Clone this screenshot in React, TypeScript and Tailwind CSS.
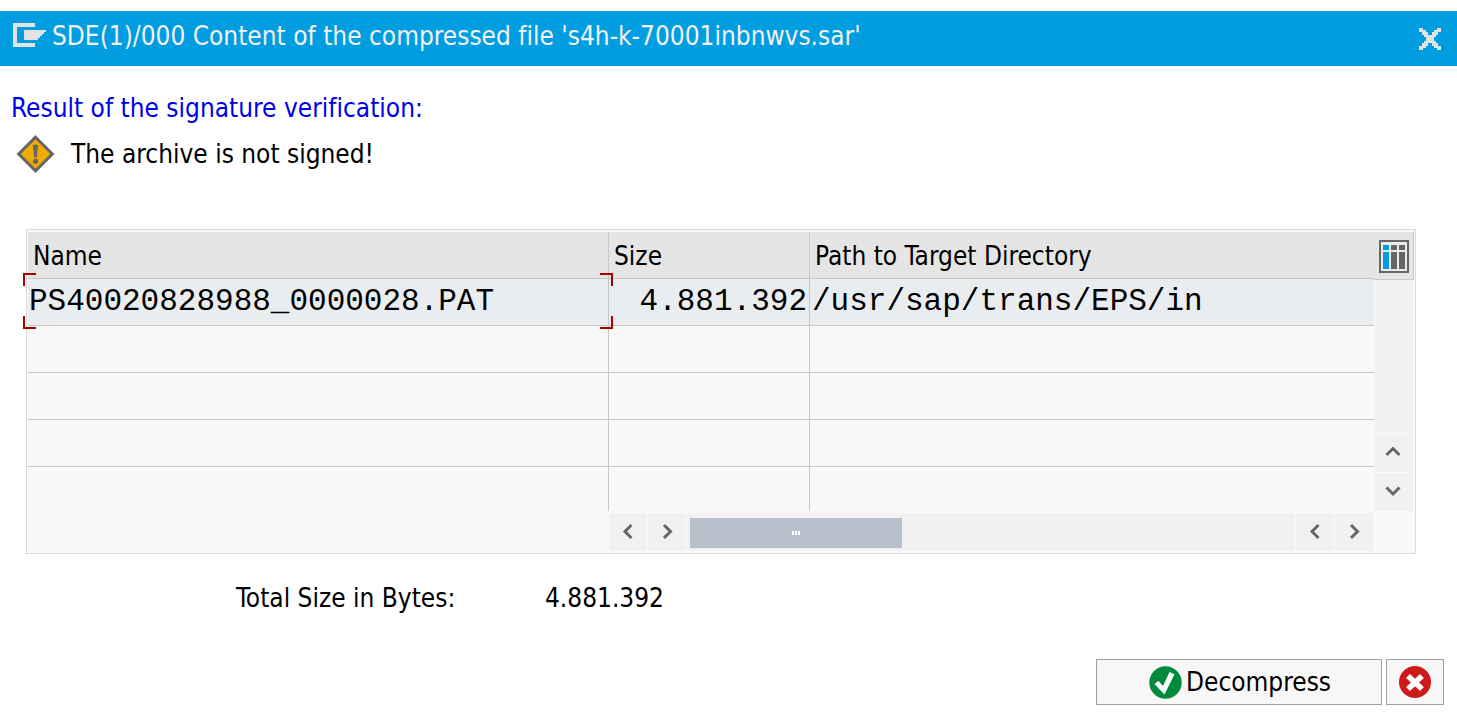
import React from "react";

type Direction = "left" | "right" | "up" | "down";

type ArchiveEntry = { name: string; size: string; path: string };

const entries: ArchiveEntry[] = [
  { name: "PS40020828988_0000028.PAT", size: "4.881.392", path: "/usr/sap/trans/EPS/in" },
];

const emptyRows = [0, 1, 2, 3];

const chevrons: Record<Direction, string> = {
  left: "M12.5 2 6 8.5l6.5 6.5",
  right: "M6 2l6.5 6.5L6 15",
  up: "M1.5 11 8 4.5l6.5 6.5",
  down: "M1.5 4.5 8 11l6.5-6.5",
};

function ScrollButton({ direction, label }: { direction: Direction; label: string }) {
  return (
    <button
      type="button"
      aria-label={label}
      className="flex size-[38px] shrink-0 items-center justify-center bg-[#f1f1f1]"
    >
      <svg viewBox="0 0 18 18" className="size-[18px]" fill="none" stroke="#666" strokeWidth="3">
        <path d={chevrons[direction]} />
      </svg>
    </button>
  );
}

function WindowIcon() {
  return (
    <svg viewBox="0 0 34 24" className="mb-2 h-6 w-[34px] shrink-0" fill="#e2e2e2" shapeRendering="crispEdges">
      <path d="M0 0h22v4H4v16h18v4H0z" />
      <path d="M11 7h22v2h-2v2h-2v2h-2v2h-2v2H11z" />
    </svg>
  );
}

function CloseIcon() {
  return (
    <svg viewBox="0 0 22 22" className="size-[22px]" fill="#e2e2e2" shapeRendering="crispEdges">
      <path d="M0 0h4v2h3v2h2v3h4V4h2V2h3V0h4v4h-3v3h-2v2h-2v4h2v2h2v3h3v4h-4v-2h-3v-2h-2v-3H9v3H7v2H4v2H0v-4h3v-3h2v-2h2V9H5V7H3V4H0z" />
    </svg>
  );
}

function WarningIcon() {
  return (
    <svg viewBox="0 0 40 40" className="size-10 shrink-0" role="img" aria-label="Warning">
      <path d="M20.5 3.2 37.3 20 20.5 36.8 3.7 20z" fill="#f0ab00" stroke="#666" strokeWidth="3" />
      <path d="M17.8 11.5q2.7-1.8 5.4 0l-1.5 12h-2.4z" fill="#666" />
      <circle cx="20.5" cy="27.3" r="2.6" fill="#666" />
    </svg>
  );
}

function ColumnsIcon() {
  return (
    <svg viewBox="0 0 30 33" className="h-[33px] w-[30px]" shapeRendering="crispEdges">
      <rect width="30" height="33" fill="#666" />
      <rect x="2" y="2" width="26" height="29" fill="#ececec" />
      <path d="M4 5h6v5H4zM4 12h6v17H4z" fill="#009de0" />
      <path d="M12 5h6v5h-6zM12 12h6v17h-6zM20 5h6v5h-6zM20 12h6v17h-6z" fill="#666" />
    </svg>
  );
}

function SelectionFrame() {
  return (
    <span aria-hidden="true" className="pointer-events-none absolute -top-1.5 -right-[5px] -bottom-1 -left-[5px]">
      <span className="absolute top-0 left-0 size-[13px] border-t-2 border-l-2 border-[#a80000]" />
      <span className="absolute top-0 right-0 size-[13px] border-t-2 border-r-2 border-[#a80000]" />
      <span className="absolute bottom-0 left-0 size-[13px] border-b-2 border-l-2 border-[#a80000]" />
      <span className="absolute right-0 bottom-0 size-[13px] border-r-2 border-b-2 border-[#a80000]" />
    </span>
  );
}

function ArchiveTable() {
  return (
    <table className="w-full table-fixed border-separate border-spacing-0 text-left">
      <colgroup>
        <col className="w-[581px]" />
        <col className="w-[201px]" />
        <col />
      </colgroup>
      <thead>
        <tr className="h-[47px] bg-[#e5e5e5]">
          <th scope="col" className="border-r border-b border-[#c8c8c8] pt-0.5 pr-0 pb-0 pl-[5px] font-normal">Name</th>
          <th scope="col" className="border-r border-b border-[#c8c8c8] pt-0.5 pr-0 pb-0 pl-[5px] font-normal">Size</th>
          <th scope="col" className="border-b border-[#c8c8c8] pt-0.5 pr-0 pb-0 pl-[5px] font-normal">Path to Target Directory</th>
        </tr>
      </thead>
      <tbody>
        {entries.map((entry) => (
          <tr
            key={entry.name}
            className="h-[47px] bg-[#e9edf0] font-['Courier_New','Liberation_Mono',monospace] text-[31px] leading-9 whitespace-nowrap"
          >
            <td className="relative border-r border-b border-[#c8c8c8] p-0 pl-px">
              {entry.name}
              <SelectionFrame />
            </td>
            <td className="border-r border-b border-[#c8c8c8] p-0 pr-0.5 text-right">{entry.size}</td>
            <td className="border-b border-[#c8c8c8] p-0 pl-0.5">{entry.path}</td>
          </tr>
        ))}
        {emptyRows.map((row) => (
          <tr key={row} className="group h-[47px] last:h-11">
            <td className="border-r border-b border-[#c8c8c8] p-0 group-last:border-b-0" />
            <td className="border-r border-b border-[#c8c8c8] p-0 group-last:border-b-0" />
            <td className="border-b border-[#c8c8c8] p-0 group-last:border-b-0" />
          </tr>
        ))}
      </tbody>
    </table>
  );
}

export default function App() {
  return (
    <div className="min-h-screen bg-white pt-[11px] font-['DejaVu_Sans_Condensed','Noto_Sans',sans-serif] text-[26px] leading-8 text-black [font-variant-ligatures:none]">
      <header className="flex h-[55px] items-center bg-[#009de0] pr-4 pl-[13px] text-[#f2f2f2]">
        <WindowIcon />
        <h1 className="flex-1 pb-1.5 pl-[5px] whitespace-nowrap">
          SDE(1)/000 Content of the compressed file 's4h-k-70001inbnwvs.sar'
        </h1>
        <button type="button" aria-label="Close">
          <CloseIcon />
        </button>
      </header>

      <main>
        <section className="pt-[26px] pl-[11px]">
          <h2 className="text-[#0000f0]">Result of the signature verification:</h2>
          <p className="mt-2.5 flex h-10 items-center gap-4 pl-1">
            <WarningIcon />
            <span>The archive is not signed!</span>
          </p>
        </section>

        <section className="mt-[55px] mr-[41px] ml-[26px] border border-[#dadada] bg-[#f9f9f9] px-px py-0.5">
          <div className="flex">
            <div className="min-w-0 flex-1">
              <ArchiveTable />
            </div>
            <div className="flex w-10 flex-col">
              <button
                type="button"
                aria-label="Column settings"
                className="flex h-12 items-center justify-center border-r border-b border-[#c8c8c8] bg-[#e5e5e5] pt-0.5"
              >
                <ColumnsIcon />
              </button>
              <div className="flex flex-1 flex-col gap-px px-px">
                <div className="flex-1 bg-[#f1f1f1]" />
                <ScrollButton direction="up" label="Scroll up" />
                <ScrollButton direction="down" label="Scroll down" />
              </div>
            </div>
          </div>
          <div className="mt-0.5 mr-[41px] ml-[581px] flex gap-px">
            <ScrollButton direction="left" label="Scroll left" />
            <ScrollButton direction="right" label="Scroll right" />
            <div className="flex flex-1 items-center bg-[#f1f1f1] pt-0.5 pl-[3px]">
              <div className="flex h-[30px] w-[35%] items-center justify-center gap-px bg-[#b8c1cb]">
                <span className="h-1 w-0.5 bg-white" />
                <span className="h-1 w-0.5 bg-white" />
                <span className="h-1 w-0.5 bg-white" />
              </div>
            </div>
            <ScrollButton direction="left" label="Page left" />
            <ScrollButton direction="right" label="Page right" />
          </div>
        </section>

        <dl className="mt-7 ml-[236px] flex w-[428px] justify-between whitespace-nowrap">
          <dt>Total Size in Bytes:</dt>
          <dd>4.881.392</dd>
        </dl>
      </main>

      <footer className="mt-[45px] flex justify-end gap-1 pr-[13px]">
        <button
          type="button"
          className="flex h-[46px] w-[286px] items-center justify-center gap-1 border border-[#a0a0a0] bg-[#f7f7f7] pl-0.5"
        >
          <svg viewBox="0 0 33 33" className="size-[33px] shrink-0">
            <circle cx="16.5" cy="16.5" r="16.2" fill="#008a3b" />
            <path d="M5.5 18l4-3 4.5 5L20.5 6l5 2.2L15.5 28.5z" fill="#fff" />
          </svg>
          <span>Decompress</span>
        </button>
        <button
          type="button"
          aria-label="Cancel"
          className="flex h-[46px] w-[58px] items-center justify-center border border-[#a0a0a0] bg-[#f7f7f7]"
        >
          <svg viewBox="0 0 32 32" className="size-8">
            <circle cx="16" cy="16" r="16" fill="#cc1919" />
            <path d="M9 10l14 13M23 10L9 23" stroke="#fff" strokeWidth="5.6" />
          </svg>
        </button>
      </footer>
    </div>
  );
}
